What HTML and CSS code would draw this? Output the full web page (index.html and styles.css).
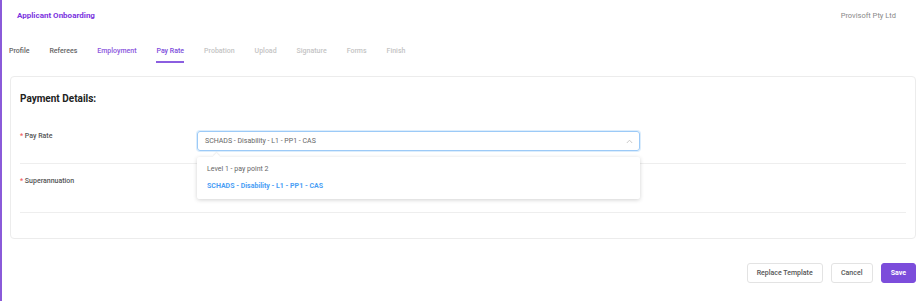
FILE: index.html
```html
<!DOCTYPE html>
<html lang="en">
<head>
  <meta charset="UTF-8" />
  <meta name="viewport" content="width=device-width, initial-scale=1.0" />
  <title>Applicant Onboarding</title>
  <link rel="stylesheet" href="styles.css">
</head>
<body>

<div class="app">
  <header class="topbar">
    <div class="title">Applicant Onboarding</div>
    <div class="company">Provisoft Pty Ltd</div>
  </header>

  <nav class="tabs">
    <span class="tab done">Profile</span>
    <span class="tab done">Referees</span>
    <span class="tab visited">Employment</span>
    <span class="tab active">Pay Rate</span>
    <span class="tab">Probation</span>
    <span class="tab">Upload</span>
    <span class="tab">Signature</span>
    <span class="tab">Forms</span>
    <span class="tab">Finish</span>
  </nav>

  <section class="card">
    <h2>Payment Details:</h2>

    <div class="form-row">
      <label><span class="req">*</span> Pay Rate</label>
      <div class="field">
        <div class="select open">
          <span>SCHADS - Disability - L1 - PP1 - CAS</span>
          <svg class="caret" width="7" height="5" viewBox="0 0 7 5"><path d="M0.8 4 L3.5 1.2 L6.2 4" fill="none" stroke="#c4c4c4" stroke-width="0.9"/></svg>
        </div>
        <ul class="dropdown">
          <li>Level 1 - pay point 2</li>
          <li class="selected">SCHADS - Disability - L1 - PP1 - CAS</li>
        </ul>
      </div>
    </div>

    <div class="form-row tall">
      <label><span class="req">*</span> Superannuation</label>
      <div class="field">
        <div class="select"></div>
      </div>
    </div>
  </section>

  <div class="actions">
    <button class="btn">Replace Template</button>
    <button class="btn wide">Cancel</button>
    <button class="btn primary">Save</button>
  </div>
</div>

</body>
</html>
```

FILE: styles.css
```css
html, body {
  margin: 0;
  padding: 0;
}

body {
  font-family: Roboto, 'Liberation Sans', sans-serif;
  background: #fff;
  color: #333;
}

.app {
  border-left: 2px solid #8a5ad9;
  min-height: 301px;
  box-sizing: border-box;
}

.topbar {
  display: flex;
  justify-content: space-between;
  align-items: center;
  padding: 10px 24px 0 15px;
  height: 10px;
}

.title {
  font-size: 8px;
  font-weight: 700;
  color: #7b33e0;
}

.company {
  font-size: 7.5px;
  color: #888;
}

.tabs {
  display: flex;
  gap: 20px;
  padding: 0 0 0 7px;
  margin-top: 26px;
}

.tab {
  font-size: 7px;
  font-weight: 500;
  color: #c4c4c4;
  line-height: 10px;
  padding-bottom: 5px;
  border-bottom: 2px solid transparent;
}

.tab.done {
  color: #666;
}

.tab.visited {
  color: #8b55dd;
}

.tab.active {
  color: #7d4cdb;
  border-bottom-color: #8b5ee0;
}

.card {
  margin: 13px 4px 0 8px;
  border: 1px solid #ececec;
  border-radius: 4px;
  padding: 15px 9px 25px 9px;
}

.card h2 {
  margin: 0 0 14px 0;
  font-size: 10px;
  line-height: 13px;
  font-weight: 700;
  color: #222;
}

.form-row {
  display: grid;
  grid-template-columns: 177px 443px;
  padding: 12px 0;
  border-bottom: 1px solid #eee;
}

.form-row.tall {
  padding-bottom: 16px;
}

.form-row label {
  font-size: 7px;
  font-weight: 500;
  color: #555;
  line-height: 10px;
}

.req {
  color: #f05a5a;
}

.field {
  position: relative;
}

.select {
  height: 20px;
  box-sizing: border-box;
  border: 1px solid #dcdcdc;
  border-radius: 3px;
  display: flex;
  align-items: center;
  justify-content: space-between;
  padding: 0 6px 0 7px;
  font-size: 7px;
  color: #666;
}

.select.open {
  border-color: #9ccaf7;
  box-shadow: 0 0 0 1px rgba(156, 202, 247, 0.35);
}

.dropdown {
  position: absolute;
  top: 26px;
  left: 0;
  right: 0;
  margin: 0;
  padding: 4px 0;
  list-style: none;
  background: #fff;
  border-radius: 2px;
  box-shadow: 0 1px 4px rgba(0, 0, 0, 0.18);
  z-index: 2;
}

.dropdown::before {
  content: "";
  position: absolute;
  top: -3px;
  left: 17px;
  width: 5px;
  height: 5px;
  background: #fff;
  transform: rotate(45deg);
  box-shadow: -1px -1px 1px rgba(0, 0, 0, 0.06);
}

.dropdown li {
  font-size: 7px;
  line-height: 17px;
  padding: 0 10px;
  color: #666;
}

.dropdown li.selected {
  color: #4a9ef5;
  font-weight: 700;
}

.actions {
  display: flex;
  justify-content: flex-end;
  gap: 8px;
  margin: 24px 4px 0 0;
}

.btn {
  font-family: inherit;
  font-size: 7px;
  font-weight: 500;
  height: 20px;
  padding: 0 9px;
  background: #fff;
  color: #555;
  border: 1px solid #e3e3e3;
  border-radius: 3px;
  cursor: pointer;
}

.btn.wide {
  min-width: 42px;
}

.btn.primary {
  background: #7c4ddb;
  border-color: #7c4ddb;
  color: #fff;
  font-weight: 700;
}
```
